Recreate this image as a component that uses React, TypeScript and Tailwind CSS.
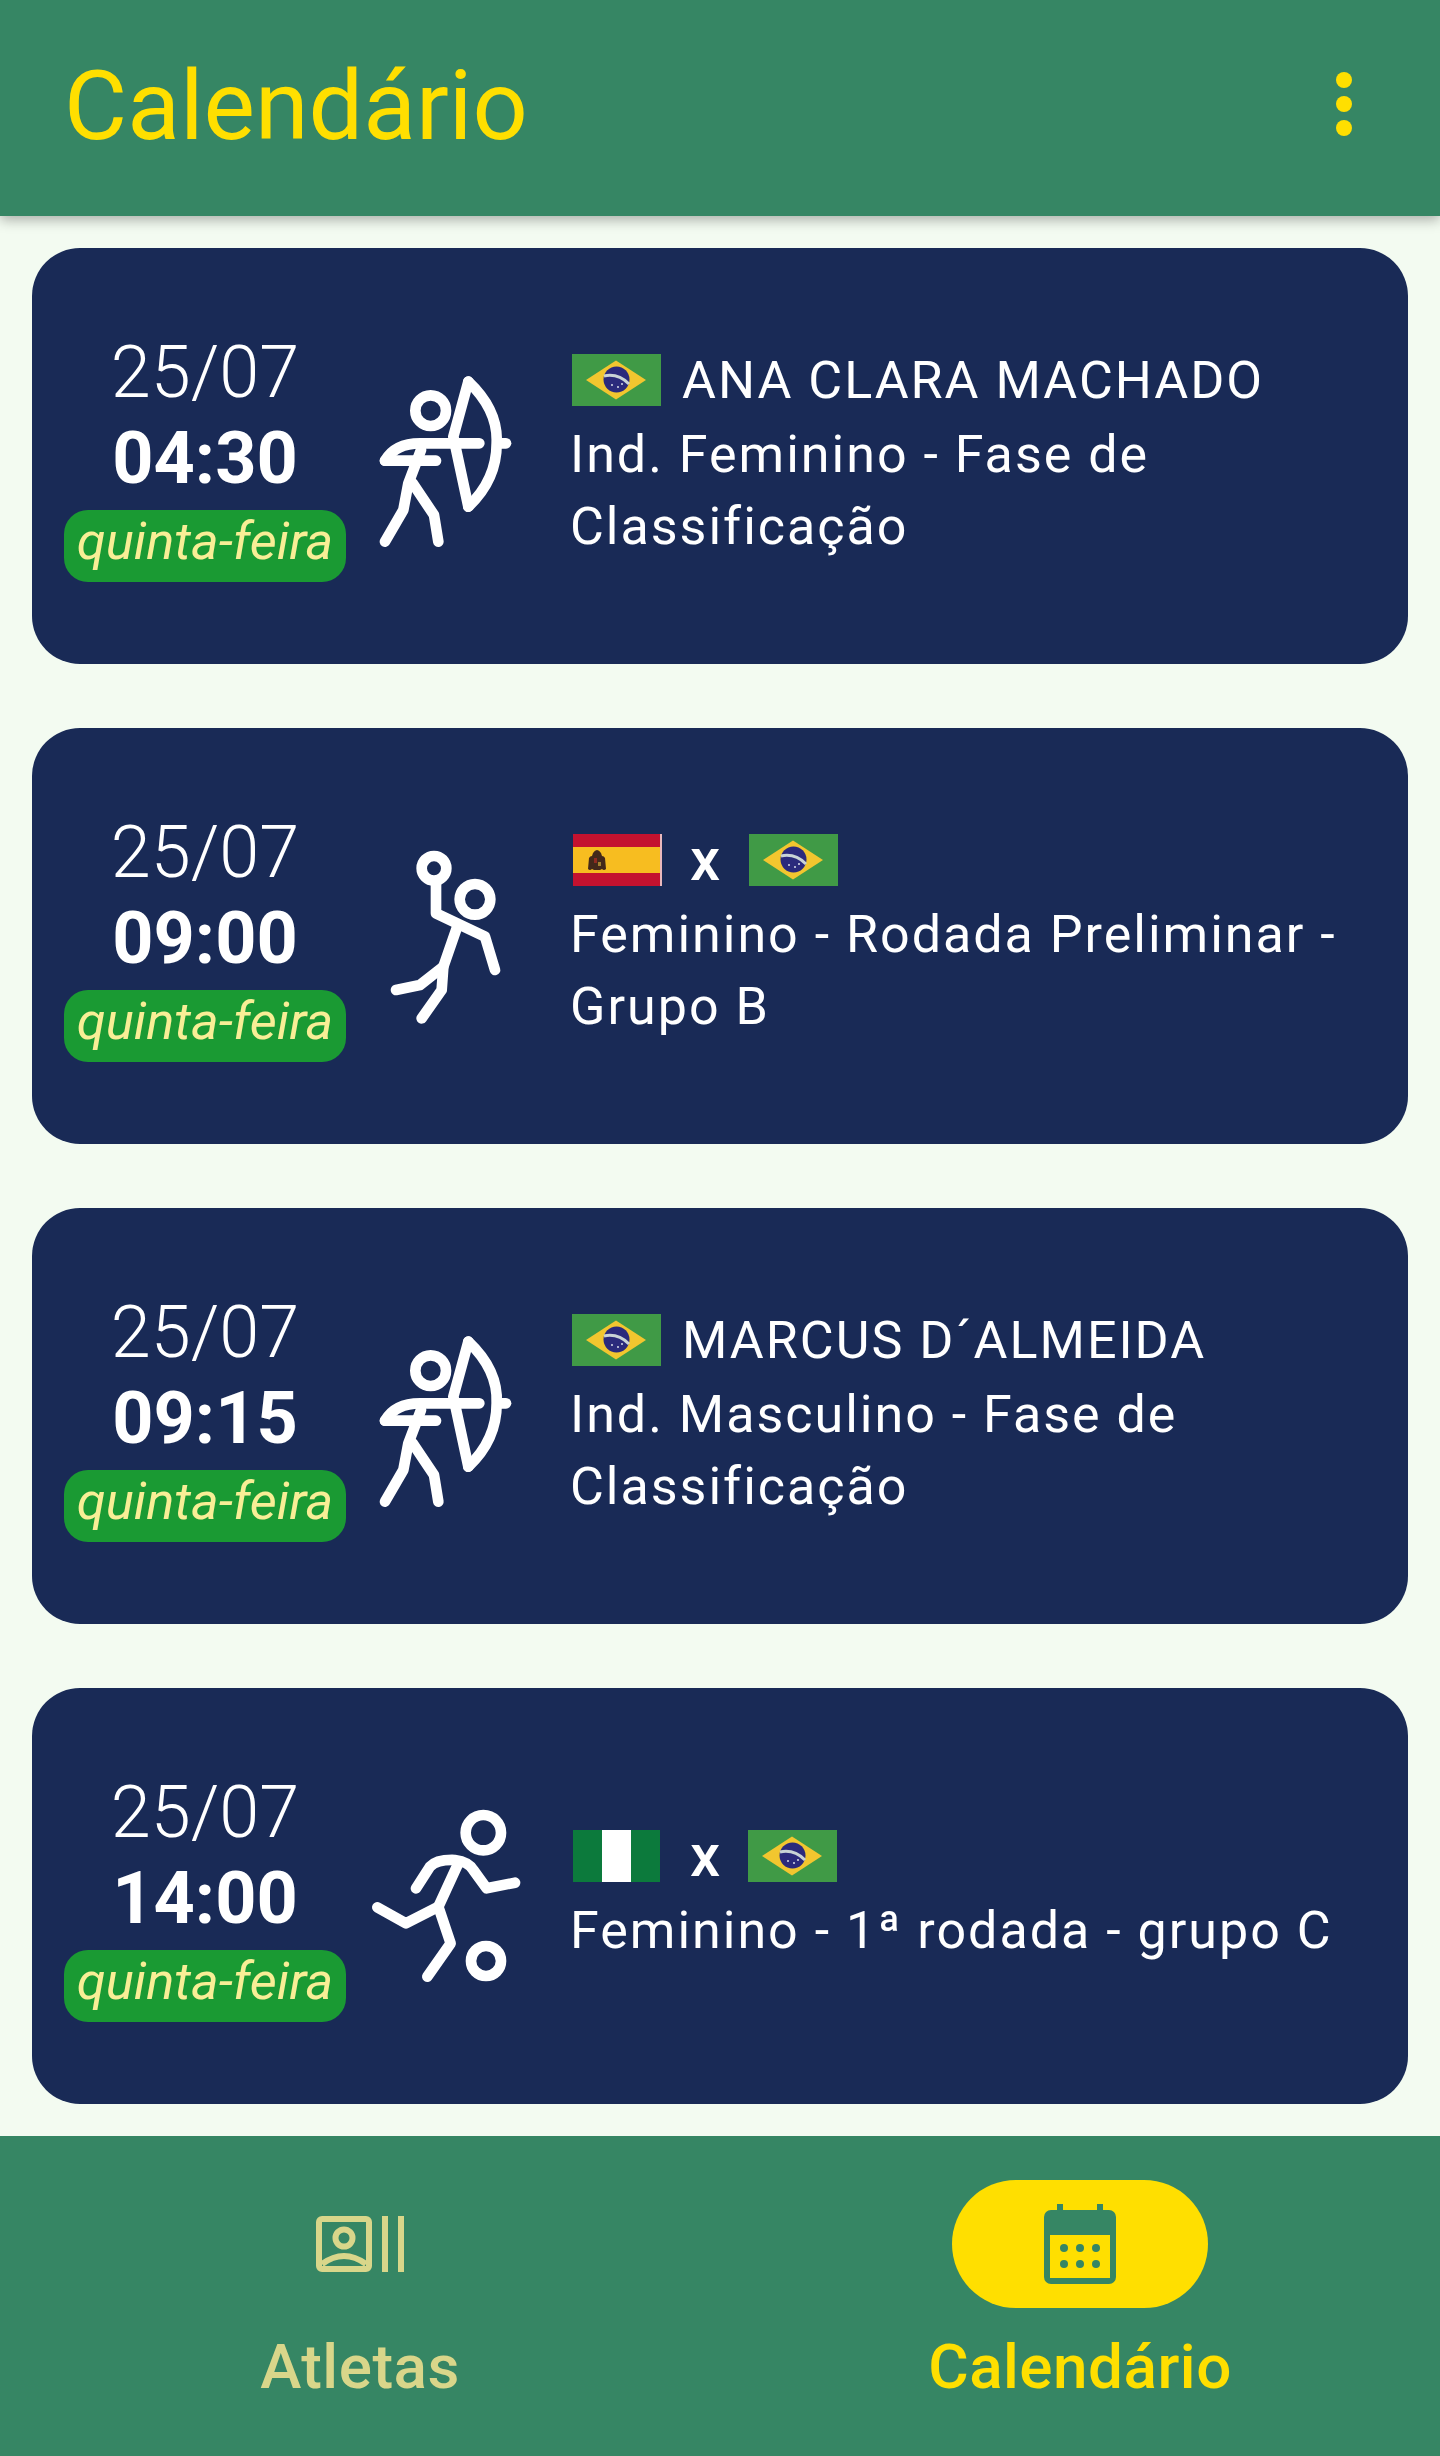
import React from "react";

const font = { fontFamily: "Roboto, sans-serif" };

function BrazilFlag() {
  return (
    <svg width="89" height="52" viewBox="0 0 89 52" className="shrink-0">
      <rect width="89" height="52" fill="#409a46" />
      <polygon points="44,6.5 74,26 44,45.5 14,26" fill="#f2c62f" />
      <circle cx="44.5" cy="25.5" r="13" fill="#2b2a7c" />
      <path d="M32 22Q46 19 57 30" fill="none" stroke="#c9d3d6" strokeWidth="3" />
      <circle cx="40" cy="31" r="1" fill="#d8dce8" />
      <circle cx="46" cy="33" r="1" fill="#d8dce8" />
      <circle cx="50" cy="30" r="1" fill="#d8dce8" />
    </svg>
  );
}

function SpainFlag() {
  return (
    <svg width="89" height="52" viewBox="0 0 89 52" className="shrink-0">
      <rect width="87" height="52" fill="#c4122f" />
      <rect y="13" width="87" height="26" fill="#f7bd20" />
      <rect x="87" width="2" height="52" fill="#e9b8bc" />
      <path d="M16 24q1-2 3-2l1-3q2-3 4-3t4 3l1 3q2 0 3 2l1 11q-2 2-4 0l-2 1h-6l-2-1q-2 2-4 0z" fill="#43281a" />
      <rect x="21" y="24" width="3" height="5" fill="#8f2a20" />
      <rect x="25" y="28" width="3" height="4" fill="#a08030" />
    </svg>
  );
}

function NigeriaFlag() {
  return (
    <svg width="87" height="52" viewBox="0 0 87 52" className="shrink-0">
      <rect width="87" height="52" fill="#0c7a3c" />
      <rect x="29" width="29" height="52" fill="#ffffff" />
    </svg>
  );
}

function ArcheryIcon() {
  return (
    <svg width="220" height="240" viewBox="18 48 660 720" fill="none" stroke="#fff" strokeWidth="32" strokeLinecap="round" strokeLinejoin="round">
      <circle cx="272" cy="272" r="46" />
      <path d="M385 185Q475 270 470 370Q470 480 385 560" />
      <path d="M385 185L340 350L385 560" />
      <path d="M135 422Q165 370 240 370H418" />
      <path d="M135 422H288" />
      <path d="M480 370H498" />
      <path d="M243 390L205 490L190 570L135 665" />
      <path d="M218 490L282 585L295 665" />
    </svg>
  );
}

function HandballIcon() {
  return (
    <svg width="220" height="240" viewBox="-42 -12 660 720" fill="none" stroke="#fff" strokeWidth="32" strokeLinecap="round" strokeLinejoin="round">
      <circle cx="222" cy="145" r="37" />
      <circle cx="345" cy="238" r="46" />
      <path d="M228 190V280L375 350L405 450" />
      <path d="M290 325L250 440L245 510L185 595" />
      <path d="M250 440L180 495L108 510" />
    </svg>
  );
}

function FootballIcon() {
  return (
    <svg width="220" height="240" viewBox="18 -12 660 720" fill="none" stroke="#fff" strokeWidth="32" strokeLinecap="round" strokeLinejoin="round">
      <circle cx="430" cy="158" r="53" />
      <circle cx="438" cy="543" r="45" />
      <path d="M228 325L270 260Q290 238 345 240Q385 245 400 270L440 325L525 308" />
      <path d="M355 250L295 380L332 490L262 590" />
      <path d="M295 380L198 430L112 382" />
    </svg>
  );
}

function ActorsIcon() {
  return (
    <svg width="88" height="56" viewBox="0 0 88 56" fill="none" stroke="#d9d68a" strokeWidth="6">
      <rect x="3" y="3" width="50" height="50" rx="3" />
      <circle cx="28" cy="22" r="8.5" />
      <path d="M6 48Q28 32 50 48" />
      <path d="M69 0V56" />
      <path d="M85 0V56" />
    </svg>
  );
}

function CalendarIcon() {
  return (
    <svg width="72" height="80" viewBox="0 0 72 80">
      <path d="M13 0h6v6h34V0h6v6h6a7 7 0 0 1 7 7v60a7 7 0 0 1-7 7H7a7 7 0 0 1-7-7V13a7 7 0 0 1 7-7h6z" fill="#368664" />
      <rect x="6" y="31" width="60" height="43" fill="#ffdf00" />
      {[20, 36, 52].map((x) => (
        <React.Fragment key={x}>
          <circle cx={x} cy="44" r="4" fill="#368664" />
          <circle cx={x} cy="60" r="4" fill="#368664" />
        </React.Fragment>
      ))}
    </svg>
  );
}

type Match = {
  time: string;
  icon: React.ReactNode;
  flags: React.ReactNode;
  lines: string[];
};

const matches: Match[] = [
  {
    time: "04:30",
    icon: <ArcheryIcon />,
    flags: (
      <>
        <BrazilFlag />
        <span className="ml-[21px] pt-[3px]">ANA CLARA MACHADO</span>
      </>
    ),
    lines: ["Ind. Feminino - Fase de", "Classificação"],
  },
  {
    time: "09:00",
    icon: <HandballIcon />,
    flags: (
      <>
        <div className="ml-[1px]">
          <SpainFlag />
        </div>
        <span className="mr-[29px] ml-[28px] text-[60px] font-medium tracking-normal">x</span>
        <BrazilFlag />
      </>
    ),
    lines: ["Feminino - Rodada Preliminar -", "Grupo B"],
  },
  {
    time: "09:15",
    icon: <ArcheryIcon />,
    flags: (
      <>
        <BrazilFlag />
        <span className="ml-[21px] pt-[3px]">MARCUS D´ALMEIDA</span>
      </>
    ),
    lines: ["Ind. Masculino - Fase de", "Classificação"],
  },
  {
    time: "14:00",
    icon: <FootballIcon />,
    flags: (
      <>
        <div className="ml-[1px]">
          <NigeriaFlag />
        </div>
        <span className="mr-[28px] ml-[30px] text-[60px] font-medium tracking-normal">x</span>
        <BrazilFlag />
      </>
    ),
    lines: ["Feminino - 1ª rodada - grupo C"],
  },
];

function MatchCard({ match }: { match: Match }) {
  return (
    <div className="flex h-[416px] items-center rounded-[48px] bg-[#192a56] pl-8 text-white">
      <div className="flex w-[282px] flex-col items-center">
        <div className="text-[72px] leading-[86px] font-light">25/07</div>
        <div className="text-[72px] leading-[86px] font-bold">{match.time}</div>
        <div className="mt-[8px] flex h-[72px] w-[282px] items-center justify-center rounded-[24px] bg-[#1a9a33] pb-[10px] text-[52.5px] text-[#f8ee96] italic">
          quinta-feira
        </div>
      </div>
      <div className="flex h-[240px] w-[224px] shrink-0 items-center justify-start">{match.icon}</div>
      <div className="flex flex-col pb-[3px] text-[52px] leading-[72px] tracking-[2px]">
        <div className="flex h-[72px] items-center pb-[6px] pl-[2px]">{match.flags}</div>
        {match.lines.map((line) => (
          <div key={line}>{line}</div>
        ))}
      </div>
    </div>
  );
}

export default function App() {
  return (
    <div style={font} className="flex h-[2456px] w-[1440px] flex-col overflow-hidden bg-[#f3fbf1]">
      <header className="relative z-10 flex h-[216px] shrink-0 items-center justify-between bg-[#368664] pr-[88px] pb-2 pl-[64px] shadow-[0_4px_12px_rgba(0,0,0,0.3)]">
        <h1 className="mt-[6px] text-[97px] font-normal text-[#ffdf00]">Calendário</h1>
        <div className="flex flex-col gap-[8px]">
          <span className="h-4 w-4 rounded-full bg-[#ffdf00]" />
          <span className="h-4 w-4 rounded-full bg-[#ffdf00]" />
          <span className="h-4 w-4 rounded-full bg-[#ffdf00]" />
        </div>
      </header>
      <main className="flex flex-1 flex-col gap-16 px-8 pt-8">
        {matches.map((match) => (
          <MatchCard key={match.time} match={match} />
        ))}
      </main>
      <nav className="grid h-[320px] shrink-0 grid-cols-2 bg-[#368664] pt-11">
        <div className="flex flex-col items-center">
          <div className="flex h-32 w-64 items-center justify-center">
            <ActorsIcon />
          </div>
          <span className="mt-[23px] text-[62px] leading-[72px] font-medium tracking-[0.5px] text-[#d9d68a]">Atletas</span>
        </div>
        <div className="flex flex-col items-center">
          <div className="flex h-32 w-64 items-center justify-center rounded-full bg-[#ffdf00]">
            <CalendarIcon />
          </div>
          <span className="mt-[23px] text-[62px] leading-[72px] font-medium tracking-[0.5px] text-[#ffdf00]">Calendário</span>
        </div>
      </nav>
    </div>
  );
}
